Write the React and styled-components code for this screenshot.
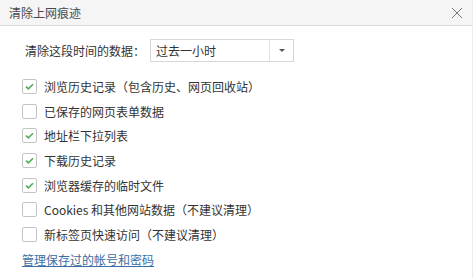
import React, { useState } from "react";
import styled, { createGlobalStyle } from "styled-components";

const GlobalStyle = createGlobalStyle`
  html, body {
    margin: 0;
    padding: 0;
    background: #fff;
  }
  body {
    font-family: "Noto Sans CJK SC", "Noto Sans", sans-serif;
    font-size: 12px;
    color: #333;
  }
`;

const Dialog = styled.div`
  width: 473px;
  height: 278px;
  box-sizing: border-box;
  background: #fff;
  border-right: 1px solid #ececec;
  overflow: hidden;
`;

const Header = styled.div`
  height: 26px;
  box-sizing: border-box;
  display: flex;
  align-items: center;
  justify-content: space-between;
  padding: 0 9px 0 9px;
  background: #f5f5f5;
  border-bottom: 1px solid #dcdcdc;
`;

const Title = styled.span`
  font-size: 12px;
  color: #4a4a4a;
`;

const CloseButton = styled.button`
  border: 0;
  background: transparent;
  padding: 0;
  width: 12px;
  height: 12px;
  display: flex;
  cursor: pointer;
`;

const Body = styled.div`
  padding: 13px 0 0 22px;
`;

const RangeRow = styled.div`
  display: flex;
  align-items: center;
  padding-left: 3px;
  margin-bottom: 12px;
`;

const Label = styled.span`
  width: 125px;
  color: #333;
`;

const Select = styled.div`
  width: 144px;
  height: 23px;
  box-sizing: border-box;
  border: 1px solid #d6d6d6;
  display: flex;
  align-items: stretch;
  background: #fff;
`;

const SelectValue = styled.span`
  flex: 1;
  display: flex;
  align-items: center;
  padding-left: 5px;
  color: #333;
`;

const SelectArrow = styled.span`
  width: 23px;
  border-left: 1px solid #e0e0e0;
  display: flex;
  align-items: center;
  justify-content: center;
  &::after {
    content: "";
    border-left: 3px solid transparent;
    border-right: 3px solid transparent;
    border-top: 3px solid #555;
  }
`;

const OptionList = styled.div`
  display: flex;
  flex-direction: column;
`;

const Option = styled.label`
  display: flex;
  align-items: center;
  gap: 7px;
  height: 24.7px;
  color: #333;
  cursor: pointer;
`;

const Box = styled.span`
  width: 13px;
  height: 13px;
  border: 1px solid #c4c4c4;
  border-radius: 2px;
  background: #fff;
  display: flex;
  align-items: center;
  justify-content: center;
  flex: none;
`;

const ManageLink = styled.a`
  display: inline-block;
  margin-top: 4px;
  color: #3b6ea5;
  text-decoration: underline;
  cursor: pointer;
`;

const Check = () => (
  <svg width="9" height="7" viewBox="0 0 9 7">
    <path d="M1 3.6 L3.4 5.8 L8 1.2" fill="none" stroke="#4fae5a" strokeWidth="1.6" />
  </svg>
);

const items = [
  { text: "浏览历史记录（包含历史、网页回收站）", checked: true },
  { text: "已保存的网页表单数据", checked: false },
  { text: "地址栏下拉列表", checked: true },
  { text: "下载历史记录", checked: true },
  { text: "浏览器缓存的临时文件", checked: true },
  { text: "Cookies 和其他网站数据（不建议清理）", checked: false },
  { text: "新标签页快速访问（不建议清理）", checked: false },
];

export default function App() {
  const [checks, setChecks] = useState(items.map((i) => i.checked));
  return (
    <>
      <GlobalStyle />
      <Dialog>
        <Header>
          <Title>清除上网痕迹</Title>
          <CloseButton>
            <svg width="12" height="12" viewBox="0 0 12 12">
              <path d="M1 1 L11 11 M11 1 L1 11" stroke="#777" strokeWidth="1" />
            </svg>
          </CloseButton>
        </Header>
        <Body>
          <RangeRow>
            <Label>清除这段时间的数据：</Label>
            <Select>
              <SelectValue>过去一小时</SelectValue>
              <SelectArrow />
            </Select>
          </RangeRow>
          <OptionList>
            {items.map((item, i) => (
              <Option
                key={item.text}
                onClick={() =>
                  setChecks((c) => c.map((v, j) => (j === i ? !v : v)))
                }
              >
                <Box>{checks[i] && <Check />}</Box>
                {item.text}
              </Option>
            ))}
          </OptionList>
          <ManageLink>管理保存过的帐号和密码</ManageLink>
        </Body>
      </Dialog>
    </>
  );
}
